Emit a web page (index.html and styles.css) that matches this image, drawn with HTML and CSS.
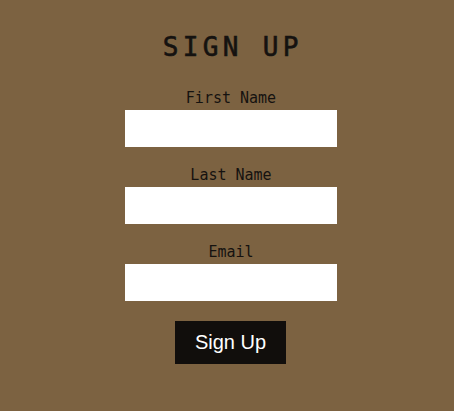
FILE: index.html
```html
<!DOCTYPE html>
<html>
<head>
<meta charset="utf-8">
<link rel="stylesheet" href="styles.css">
</head>
<body>
<div class="page">
  <form class="form">
    <h1 class="title">SIGN UP</h1>
    <label class="field">
      <span class="label">First Name</span>
      <input class="input" type="text">
    </label>
    <label class="field">
      <span class="label">Last Name</span>
      <input class="input" type="text">
    </label>
    <label class="field">
      <span class="label">Email</span>
      <input class="input" type="email">
    </label>
    <button class="btn" type="button">Sign Up</button>
  </form>
</div>
</body>
</html>
```
FILE: styles.css
```css
html, body {
  margin: 0;
  padding: 0;
  background: #7c6241;
  height: 100%;
}
.page {
  display: flex;
  justify-content: center;
  padding: 30px 0 0 8px;
}
.form {
  display: flex;
  flex-direction: column;
  align-items: center;
  font-family: "DejaVu Sans Mono", monospace;
  color: #151210;
}
.title {
  margin: 0 0 25px 0;
  font-size: 26px;
  font-weight: normal;
  letter-spacing: 4.35px;
  line-height: 34px;
  padding-left: 3.5px;
  -webkit-text-stroke: 0.6px #151210;
}
.field {
  display: flex;
  flex-direction: column;
  align-items: center;
  margin-bottom: 19px;
}
.label {
  font-size: 15px;
  line-height: 18px;
  margin-bottom: 3px;
}
.input {
  width: 212px;
  height: 37px;
  box-sizing: border-box;
  border: none;
  background: #fff;
  margin: 0;
  padding: 0;
}
.btn {
  margin: 1px 1px 0 0;
  width: 111px;
  height: 43px;
  background: #110e0c;
  color: #fff;
  border: none;
  font-family: "Liberation Sans", Arial, sans-serif;
  font-size: 20px;
  padding: 0;
}
```
